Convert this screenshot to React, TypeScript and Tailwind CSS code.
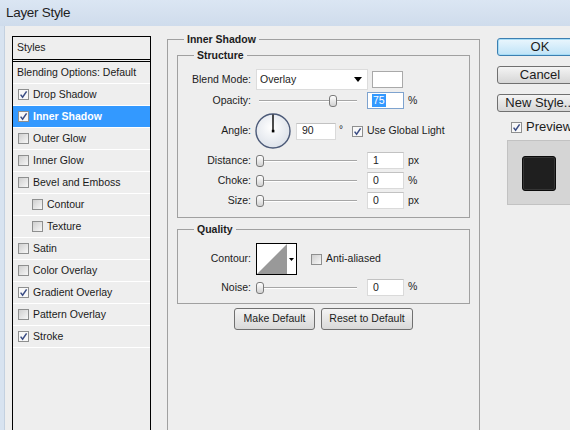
import React from "react";

function Check({ checked, light }: { checked?: boolean; light?: boolean }) {
  return (
    <span
      className={`w-[11px] h-[11px] shrink-0 border border-[#8e8f8f] flex items-center justify-center ${
        light ? "bg-[#f8f8f8]" : "bg-linear-to-br from-[#cfcfcf] to-[#f7f7f7]"
      }`}
    >
      {checked && (
        <svg width="9" height="9" viewBox="0 0 9 9">
          <path d="M1.6 4.6 L3.6 7.2 L7.6 1.4" fill="none" stroke="#3a4c84" strokeWidth="1.5" />
        </svg>
      )}
    </span>
  );
}

function Slider({ offset }: { offset: number }) {
  return (
    <div className="relative w-[101px] h-[12px] flex items-center shrink-0">
      <div className="ml-[3px] w-[98px] h-[2px] border-t border-[#a6a6a6] bg-white" />
      <div
        className="absolute top-0 w-[8px] h-[12px] rounded-[3px] border border-[#7a7a7a] bg-linear-to-b from-white to-[#d2d2d2]"
        style={{ left: `${offset}px` }}
      />
    </div>
  );
}

function Input({ value, w, focus }: { value: string; w: number; focus?: boolean }) {
  return (
    <div
      className={`h-[17px] bg-white border flex items-center pl-[4px] shrink-0 ${
        focus ? "border-[#7ea3cf]" : "border-[#dadada] border-t-[#c2c2c2]"
      }`}
      style={{ width: `${w}px` }}
    >
      {focus ? (
        <span className="bg-[#3399ff] text-white leading-[13px] px-[1px]">{value}</span>
      ) : (
        <span className="pl-[1px]">{value}</span>
      )}
    </div>
  );
}

function Label({ children }: { children: React.ReactNode }) {
  return <span className="w-[73px] text-right shrink-0">{children}</span>;
}

function StyleRow({
  label,
  checked,
  indent,
  selected,
  noBox,
}: {
  label: string;
  checked?: boolean;
  indent?: boolean;
  selected?: boolean;
  noBox?: boolean;
}) {
  return (
    <div
      className={`h-[22px] border-b border-white flex items-center ${
        noBox ? "pl-[4px]" : indent ? "pl-[19px]" : "pl-[5px]"
      } ${selected ? "bg-[#3399ff] text-white font-bold" : "text-[#1a1a1a]"}`}
    >
      {!noBox && <Check checked={checked} light={selected || checked} />}
      <span className={noBox ? "" : "ml-[4px]"}>{label}</span>
    </div>
  );
}

export default function App() {
  return (
    <div className="w-[570px] h-[430px] overflow-hidden flex flex-col bg-[#eeeeee] [font-family:'Liberation_Sans',Arial,sans-serif] text-[#1c1c1c]">
      {/* title bar */}
      <div className="h-[26px] shrink-0 bg-linear-to-b from-[#dbe6f3] to-[#cfdcec] flex items-center pl-[6px] text-[13.5px] tracking-[-0.3px] text-[#1e1e1e]">
        Layer Style
      </div>
      <div className="flex flex-1 min-h-0">
        <div className="w-[5px] shrink-0 bg-[#d8e3f0] border-r border-[#c4d1e0]" />
        <div className="flex items-start flex-1 min-w-0">
          {/* left styles list */}
          <div className="ml-[7px] mt-[10px] w-[139px] h-[410px] shrink-0 border border-black text-[10.5px]">
            <div className="h-[25px] border-b-[3px] border-double border-black flex items-center pl-[4px]">
              Styles
            </div>
            <StyleRow label="Blending Options: Default" noBox />
            <StyleRow label="Drop Shadow" checked />
            <StyleRow label="Inner Shadow" checked selected />
            <StyleRow label="Outer Glow" />
            <StyleRow label="Inner Glow" />
            <StyleRow label="Bevel and Emboss" />
            <StyleRow label="Contour" indent />
            <StyleRow label="Texture" indent />
            <StyleRow label="Satin" />
            <StyleRow label="Color Overlay" />
            <StyleRow label="Gradient Overlay" checked />
            <StyleRow label="Pattern Overlay" />
            <StyleRow label="Stroke" checked />
          </div>

          {/* middle panel */}
          <fieldset className="ml-[16px] mt-[6px] w-[313px] h-[410px] shrink-0 border border-[#a0a0a0] text-[10.5px]">
            <legend className="ml-[16px] px-[3px] h-[14px] leading-[14px] font-bold">Inner Shadow</legend>
            <div className="pl-[9px] pr-[9px]">
              <fieldset className="mt-[2px] w-[293px] border border-[#a0a0a0] pb-[8px]">
                <legend className="ml-[16px] px-[3px] h-[14px] leading-[14px] font-bold">Structure</legend>
                {/* blend mode */}
                <div className="mt-[7px] h-[21px] flex items-center">
                  <Label>Blend Mode:</Label>
                  <div className="ml-[5px] w-[112px] h-[21px] bg-white border border-[#dcdcdc] flex items-center pl-[3px] pr-[5px] justify-between">
                    <span>Overlay</span>
                    <svg width="8" height="5" viewBox="0 0 8 5">
                      <path d="M0 0 H8 L4 5 Z" fill="#000" />
                    </svg>
                  </div>
                  <div className="ml-[4px] w-[31px] h-[17px] bg-white border border-[#a9a9a9]" />
                </div>
                {/* opacity */}
                <div className="mt-[2px] h-[17px] flex items-center">
                  <Label>Opacity:</Label>
                  <div className="ml-[5px]">
                    <Slider offset={73} />
                  </div>
                  <div className="ml-[10px]">
                    <Input value="75" w={37} focus />
                  </div>
                  <span className="ml-[4px]">%</span>
                </div>
                {/* angle */}
                <div className="mt-[3px] h-[38px] flex items-center">
                  <Label>Angle:</Label>
                  <svg className="ml-[4px] shrink-0" width="36" height="36" viewBox="0 0 36 36">
                    <defs>
                      <radialGradient id="dialg" cx="0.45" cy="0.4" r="0.6">
                        <stop offset="0" stopColor="#ffffff" />
                        <stop offset="1" stopColor="#dde2ea" />
                      </radialGradient>
                    </defs>
                    <circle cx="18" cy="18" r="17" fill="url(#dialg)" stroke="#4c5a78" strokeWidth="1.4" />
                    <line x1="18" y1="18" x2="18" y2="1.5" stroke="#000" strokeWidth="1.4" />
                    <rect x="16.8" y="16.8" width="2.6" height="2.6" fill="#000" />
                  </svg>
                  <div className="ml-[5px]">
                    <Input value="90" w={40} />
                  </div>
                  <span className="ml-[3px] self-start mt-[10px] text-[10px]">°</span>
                  <div className="ml-[9px]">
                    <Check checked light />
                  </div>
                  <span className="ml-[4px]">Use Global Light</span>
                </div>
                {/* distance, choke, size */}
                {[
                  ["Distance:", "1", "px"],
                  ["Choke:", "0", "%"],
                  ["Size:", "0", "px"],
                ].map(([l, v, u], i) => (
                  <div key={l} className={`${i === 0 ? "mt-[2px]" : "mt-[3px]"} h-[17px] flex items-center`}>
                    <Label>{l}</Label>
                    <div className="ml-[5px]">
                      <Slider offset={0} />
                    </div>
                    <div className="ml-[10px]">
                      <Input value={v} w={37} />
                    </div>
                    <span className="ml-[4px]">{u}</span>
                  </div>
                ))}
              </fieldset>

              <fieldset className="mt-[4px] w-[293px] border border-[#a0a0a0] pb-[7px]">
                <legend className="ml-[16px] px-[3px] h-[14px] leading-[14px] font-bold">Quality</legend>
                <div className="mt-[7px] h-[32px] flex items-center">
                  <Label>Contour:</Label>
                  <div className="ml-[5px] w-[41px] h-[32px] border border-black bg-white flex shrink-0">
                    <svg width="30" height="30" viewBox="0 0 30 30" className="shrink-0">
                      <path d="M0 30 L30 0 L30 30 Z" fill="#999999" />
                    </svg>
                    <div className="flex-1 flex items-center justify-center">
                      <svg width="5" height="3" viewBox="0 0 5 3">
                        <path d="M0 0 H5 L2.5 3 Z" fill="#000" />
                      </svg>
                    </div>
                  </div>
                  <div className="ml-[14px]">
                    <Check />
                  </div>
                  <span className="ml-[4px]">Anti-aliased</span>
                </div>
                <div className="mt-[4px] h-[17px] flex items-center">
                  <Label>Noise:</Label>
                  <div className="ml-[5px]">
                    <Slider offset={0} />
                  </div>
                  <div className="ml-[10px]">
                    <Input value="0" w={37} />
                  </div>
                  <span className="ml-[4px] self-start">%</span>
                </div>
              </fieldset>

              <div className="mt-[4px] flex justify-center gap-[6px]">
                <div className="w-[81px] h-[22px] rounded-[3px] border border-[#707070] bg-linear-to-b from-[#f4f4f4] to-[#d9d9d9] flex items-center justify-center">
                  Make Default
                </div>
                <div className="w-[92px] h-[22px] rounded-[3px] border border-[#707070] bg-linear-to-b from-[#f4f4f4] to-[#d9d9d9] flex items-center justify-center">
                  Reset to Default
                </div>
              </div>
            </div>
          </fieldset>

          {/* right column */}
          <div className="ml-[17px] mt-[12px] w-[86px] shrink-0 flex flex-col text-[12px]">
            <div className="h-[18px] rounded-[3px] border border-[#3c7fb1] bg-linear-to-b from-[#eaf6fd] to-[#bfe3f7] shadow-[inset_0_0_0_1px_#a6dcf6] flex items-center justify-center text-[13px]">
              OK
            </div>
            <div className="mt-[10px] h-[18px] rounded-[3px] border border-[#707070] bg-linear-to-b from-[#f4f4f4] to-[#d6d6d6] flex items-center justify-center text-[13px]">
              Cancel
            </div>
            <div className="mt-[10px] h-[18px] rounded-[3px] border border-[#707070] bg-linear-to-b from-[#f4f4f4] to-[#d6d6d6] flex items-center justify-center text-[13px] whitespace-nowrap">
              New Style...
            </div>
            <div className="mt-[8px] h-[14px] flex items-center pl-[14px]">
              <Check checked light />
              <span className="ml-[4px] text-[13px]">Preview</span>
            </div>
            <div className="mt-[6px] ml-[10px] w-[80px] h-[65px] bg-[#d5d5d5] border border-[#c2c2c2] pt-[15px] pl-[14px]">
              <div className="w-[34px] h-[35px] rounded-[3px] bg-[#1f1f1f] border border-[#0b0b0b] shadow-[inset_0_0_0_1px_#353535]" />
            </div>
          </div>
        </div>
      </div>
    </div>
  );
}
